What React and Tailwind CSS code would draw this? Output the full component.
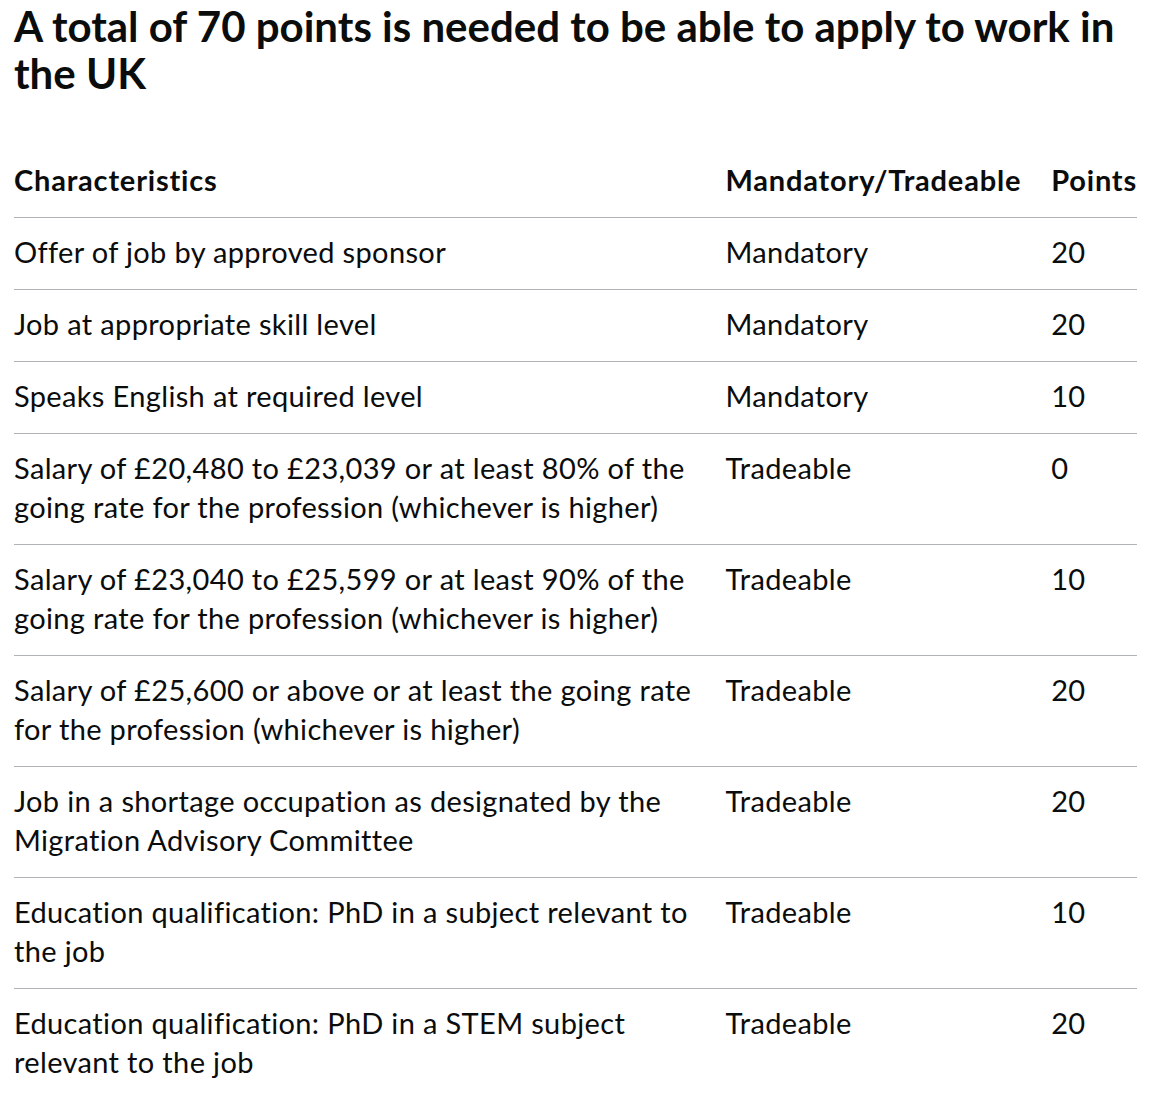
import React from 'react';

const rows = [
  { name: 'Offer of job by approved sponsor', type: 'Mandatory', points: '20' },
  { name: 'Job at appropriate skill level', type: 'Mandatory', points: '20' },
  { name: 'Speaks English at required level', type: 'Mandatory', points: '10' },
  { name: 'Salary of £20,480 to £23,039 or at least 80% of the going rate for the profession (whichever is higher)', type: 'Tradeable', points: '0' },
  { name: 'Salary of £23,040 to £25,599 or at least 90% of the going rate for the profession (whichever is higher)', type: 'Tradeable', points: '10' },
  { name: 'Salary of £25,600 or above or at least the going rate for the profession (whichever is higher)', type: 'Tradeable', points: '20' },
  { name: 'Job in a shortage occupation as designated by the Migration Advisory Committee', type: 'Tradeable', points: '20' },
  { name: 'Education qualification: PhD in a subject relevant to the job', type: 'Tradeable', points: '10' },
  { name: 'Education qualification: PhD in a STEM subject relevant to the job', type: 'Tradeable', points: '20' },
];

const App = () => {
  return (
    <div className="min-h-screen bg-white pl-[14px] pr-[19px] text-[#0b0c0c] font-['Lato',sans-serif]">
      <h2 className="pt-[3px] text-[42px] leading-[47px] font-bold">
        A total of 70 points is needed to be able to apply to work in the UK
      </h2>
      <table className="mt-[49px] w-full border-collapse text-[29px] leading-[39px] tracking-[0.35px]">
        <thead>
          <tr className="border-b border-[#b1b4b6]">
            <th className="w-[713px] pt-[14px] pb-[18px] pr-[30px] text-left font-bold tracking-[0.8px]">Characteristics</th>
            <th className="w-[324px] pt-[14px] pb-[18px] pr-[30px] text-left font-bold tracking-[0.8px]">Mandatory/Tradeable</th>
            <th className="pt-[14px] pb-[18px] text-left font-bold tracking-[0.8px]">Points</th>
          </tr>
        </thead>
        <tbody>
          {rows.map(row => (
            <tr key={row.name} className="border-b border-[#b1b4b6] last:border-b-0 align-top">
              <td className="pt-[14px] pb-[18px] pr-[30px]">{row.name}</td>
              <td className="pt-[14px] pb-[18px] pr-[30px]">{row.type}</td>
              <td className="pt-[14px] pb-[18px]">{row.points}</td>
            </tr>
          ))}
        </tbody>
      </table>
    </div>
  );
};

export default App;
